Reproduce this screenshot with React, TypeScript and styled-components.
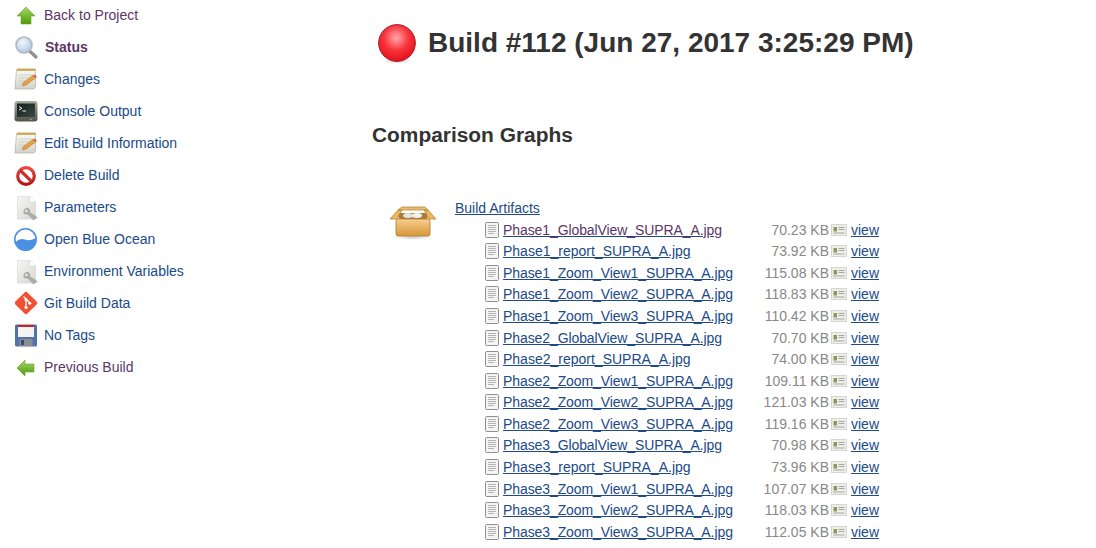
import React from 'react';
import styled, { createGlobalStyle } from 'styled-components';

const GlobalStyle = createGlobalStyle`
  html, body { margin: 0; padding: 0; background: #fff; overflow: hidden; height: 548px; }
  body { font-family: 'Liberation Sans', Arial, Helvetica, sans-serif; color: #333; }
`;

const Page = styled.div`
  display: flex;
  width: 1096px;
  height: 548px;
  overflow: hidden;
`;

const Sidebar = styled.nav`
  width: 372px;
  flex: none;
  margin-top: -1px;
  box-sizing: border-box;
  padding-left: 14px;
`;

const TaskRow = styled.a<{ $visited?: boolean; $bold?: boolean }>`
  display: flex;
  align-items: center;
  gap: ${(p) => (p.$bold ? 7 : 6)}px;
  height: 32px;
  font-size: 14px;
  font-weight: ${(p) => (p.$bold ? 700 : 400)};
  color: ${(p) => (p.$visited ? '#5c3566' : '#204a87')};
  text-decoration: none;
`;

const IconBox = styled.span`
  display: block;
  width: 24px;
  height: 24px;
  flex: none;
  svg { display: block; overflow: visible; }
`;

const Main = styled.main`
  flex: 1;
  min-width: 0;
`;

const TitleRow = styled.div`
  display: flex;
  align-items: center;
  gap: 12px;
  height: 38px;
  margin: 25px 0 0 6px;
`;

const BuildTitle = styled.h1`
  margin: 0;
  padding-bottom: 2px;
  font-size: 28px;
  font-weight: 700;
  line-height: 34px;
  color: #333;
  white-space: nowrap;
`;

const SectionTitle = styled.h2`
  margin: 58px 0 0;
  font-size: 20.9px;
  line-height: 28px;
  font-weight: 700;
  color: #333;
`;

const Artifacts = styled.section`
  display: flex;
  margin: 50px 0 0 17px;
`;

const BoxSlot = styled.div`
  width: 66px;
  flex: none;
  padding-top: 5px;
  svg { display: block; }
`;

const ArtifactBody = styled.div`
  flex: 1;
`;

const RootLink = styled.a`
  display: block;
  height: 20px;
  line-height: 18px;
  font-size: 14px;
  color: #204a87;
  text-decoration: underline;
`;

const FileRow = styled.div`
  display: grid;
  grid-template-columns: 18px 260px 66px 22px auto;
  align-items: center;
  height: 21.57px;
  margin-left: 30px;
  font-size: 14px;
  white-space: nowrap;
`;

const FileName = styled.a<{ $visited?: boolean; $tight?: boolean }>`
  color: ${(p) => (p.$visited ? '#5c3566' : '#204a87')};
  letter-spacing: ${(p) => (p.$tight ? '-0.09px' : 'normal')};
  text-decoration: underline;
  text-decoration-color: #204a87;
`;

const FileSize = styled.span`
  color: #888;
  text-align: right;
`;

const ViewLink = styled.a`
  color: #204a87;
  text-decoration: underline;
`;

const PictureSlot = styled.span`
  display: block;
  padding-left: 2px;
  svg { display: block; }
`;

const DocSlot = styled.span`
  svg { display: block; }
`;

const ArrowUp = () => (
  <svg width="24" height="24" viewBox="0 0 24 24">
    <defs>
      <linearGradient id="au" x1="0" y1="0" x2="0" y2="1">
        <stop offset="0" stopColor="#a6d86a" />
        <stop offset="1" stopColor="#4e9a06" />
      </linearGradient>
    </defs>
    <path d="M12 4 L21 13 H17 V21 H7 V13 H3 Z" fill="url(#au)" stroke="#6aa82e" strokeWidth=".6" />
  </svg>
);

const ArrowLeft = () => (
  <svg width="24" height="24" viewBox="0 0 24 24">
    <defs>
      <linearGradient id="al" x1="0" y1="0" x2="0" y2="1">
        <stop offset="0" stopColor="#a4d76c" />
        <stop offset="1" stopColor="#4e9a06" />
      </linearGradient>
    </defs>
    <path d="M3 13 L11 5 V9 H20 V17 H11 V21 Z" fill="url(#al)" stroke="#6aa82e" strokeWidth=".6" />
  </svg>
);

const Search = () => (
  <svg width="24" height="24" viewBox="0 0 24 24">
    <defs>
      <radialGradient id="lens" cx=".4" cy=".35" r=".8">
        <stop offset="0" stopColor="#f3f8fd" />
        <stop offset="1" stopColor="#9dbde2" />
      </radialGradient>
    </defs>
    <path d="M15 15.5 L22 22" stroke="#8b8f94" strokeWidth="3.2" strokeLinecap="round" />
    <circle cx="10" cy="10" r="8" fill="url(#lens)" stroke="#b4b8bd" strokeWidth="1.6" />
  </svg>
);

const Notepad = () => (
  <svg width="24" height="24" viewBox="0 0 24 24">
    <defs>
      <linearGradient id="np" x1="0" y1="0" x2="0" y2="1">
        <stop offset="0" stopColor="#fbfbf6" />
        <stop offset="1" stopColor="#d2d2cc" />
      </linearGradient>
    </defs>
    <path d="M2.5 2.5 H21.5 V19 Q21.5 22 19 22 H1 Z" fill="url(#np)" stroke="#b3b2a8" strokeWidth=".7" />
    <rect x="3" y="1.5" width="18.5" height="2.5" fill="#c9ad62" />
    <path d="M5 8 H19 M5 11 H17 M4.5 14 H12 M4 17 H11" stroke="#cfcfc7" strokeWidth="1" />
    <path d="M8.5 19 L9.5 15.5 L19 8.5 L21.5 11 L12 18 Z" fill="#e8a33c" stroke="#a06b20" strokeWidth=".5" />
    <path d="M19 8.5 L21.5 11 L22.8 9.8 L20.6 7.4 Z" fill="#d9534a" />
  </svg>
);

const Terminal = () => (
  <svg width="24" height="24" viewBox="0 0 24 24">
    <defs>
      <linearGradient id="tm" x1="0" y1="0" x2="0" y2="1">
        <stop offset="0" stopColor="#a9ad9f" />
        <stop offset="1" stopColor="#4f5348" />
      </linearGradient>
      <linearGradient id="tmScreen" x1="0" y1="0" x2="1" y2="1">
        <stop offset="0" stopColor="#12201c" />
        <stop offset="1" stopColor="#3a4a42" />
      </linearGradient>
    </defs>
    <rect x="0.5" y="2" width="23" height="20.5" rx="3" fill="url(#tm)" />
    <rect x="3" y="4.5" width="18" height="13.5" fill="url(#tmScreen)" />
    <path d="M5 7.5 L8 9.3 L5 11 M8.5 12 H12" stroke="#e8eee8" strokeWidth="1" fill="none" />
    <rect x="16" y="20" width="1.4" height="1" fill="#9fd05a" />
  </svg>
);

const NoEntry = () => (
  <svg width="24" height="24" viewBox="0 0 24 24">
    <defs>
      <linearGradient id="ne" x1="0" y1="0" x2="0" y2="1">
        <stop offset="0" stopColor="#e9483f" />
        <stop offset="1" stopColor="#b01a1a" />
      </linearGradient>
    </defs>
    <circle cx="12" cy="13" r="8.3" fill="#fff" stroke="url(#ne)" strokeWidth="3.2" />
    <path d="M6.3 7.3 L17.7 18.7" stroke="#cf2a25" strokeWidth="3.2" />
  </svg>
);

const Setting = () => (
  <svg width="24" height="24" viewBox="0 0 24 24">
    <defs>
      <linearGradient id="st" x1="0" y1="0" x2="1" y2="1">
        <stop offset="0" stopColor="#f5f5f1" />
        <stop offset="1" stopColor="#d8d8d3" />
      </linearGradient>
    </defs>
    <path d="M3.5 1.5 H16 L21.5 7 V24 H3.5 Z" fill="url(#st)" stroke="#d4d4cf" strokeWidth=".6" />
    <path d="M16 1.5 V7 H21.5" fill="#fff" stroke="#d4d4cf" strokeWidth=".6" />
    <path d="M14.5 13 Q9 12.5 9.5 18 Q11 20 13.5 19.5 L19.5 25.2 L23.8 22.5 L16.5 17.5 Q16.8 15 14.5 13 Z" fill="#a9aca7" />
    <circle cx="12.4" cy="16" r="1.2" fill="#eee" />
  </svg>
);

const BlueOcean = () => (
  <svg width="24" height="24" viewBox="0 0 24 24">
    <circle cx="11.5" cy="12.5" r="10.7" fill="#fff" stroke="#4a90e2" strokeWidth="1.6" />
    <path d="M1.5 15 Q6 10.5 11 12.5 T21.6 11 Q22.5 22.5 11.5 23 Q3.5 22.5 1.5 15 Z" fill="#4a90e2" />
  </svg>
);

const GitLogo = () => (
  <svg width="24" height="24" viewBox="0 0 24 24">
    <rect x="3.5" y="3.5" width="17" height="17" rx="2" fill="#f05133" transform="rotate(45 12 12)" />
    <path d="M9.5 5.5 L16.5 12.5 M12 8.5 V16.5" stroke="#fff" strokeWidth="1.3" />
    <circle cx="12" cy="8.5" r="1.5" fill="#fff" />
    <circle cx="15.8" cy="12.2" r="1.5" fill="#fff" />
    <circle cx="12" cy="16.5" r="1.6" fill="#fff" />
  </svg>
);

const Floppy = () => (
  <svg width="24" height="24" viewBox="0 0 24 24">
    <rect x="1" y="1.5" width="22" height="22" rx="1.5" fill="#5272a8" />
    <rect x="4" y="2" width="16" height="12" fill="#f4f4f4" />
    <rect x="4" y="2" width="16" height="2" fill="#cc2222" />
    <rect x="5.5" y="16" width="13" height="7" fill="#8a8f97" />
    <rect x="7" y="17" width="3" height="5" fill="#3b4a66" />
  </svg>
);

const RedBall = () => (
  <svg width="38" height="40" viewBox="0 0 38 40">
    <defs>
      <radialGradient id="ball" cx=".48" cy=".36" r=".62">
        <stop offset="0" stopColor="#ffa8ac" />
        <stop offset=".55" stopColor="#f8343c" />
        <stop offset="1" stopColor="#e5131d" />
      </radialGradient>
      <radialGradient id="ballShade" cx=".5" cy=".5" r=".5">
        <stop offset="0" stopColor="#888" stopOpacity=".45" />
        <stop offset="1" stopColor="#888" stopOpacity="0" />
      </radialGradient>
    </defs>
    <ellipse cx="19" cy="37" rx="15" ry="3" fill="url(#ballShade)" />
    <circle cx="19" cy="19" r="18.4" fill="url(#ball)" stroke="#9c1a24" strokeWidth=".9" />
  </svg>
);

const PackageBox = () => (
  <svg width="48" height="36" viewBox="0 0 48 36">
    <defs>
      <linearGradient id="boxFront" x1="0" y1="0" x2="0" y2="1">
        <stop offset="0" stopColor="#f5cf8f" />
        <stop offset="1" stopColor="#d8963a" />
      </linearGradient>
      <radialGradient id="boxShade" cx=".5" cy=".5" r=".5">
        <stop offset="0" stopColor="#777" stopOpacity=".4" />
        <stop offset="1" stopColor="#777" stopOpacity="0" />
      </radialGradient>
    </defs>
    <ellipse cx="24" cy="33" rx="20" ry="3" fill="url(#boxShade)" />
    <path d="M8 9 H40 L37 17 H11 Z" fill="#a87c3c" />
    <ellipse cx="19" cy="11.5" rx="5" ry="2.5" fill="#e4e4e0" />
    <ellipse cx="28" cy="11.5" rx="5" ry="2.5" fill="#f2f2ee" />
    <path d="M1 15 L9 6 L13 6 L8 15 Z M47 15 L39 6 L35 6 L40 15 Z" fill="#eab765" stroke="#b37a28" strokeWidth=".7" />
    <path d="M9 6 H39 L36 3 H13 Z" fill="#e9bd75" stroke="#b37a28" strokeWidth=".7" />
    <rect x="7" y="15" width="34" height="17" rx="2" fill="url(#boxFront)" stroke="#b37a28" strokeWidth=".8" />
  </svg>
);

const DocIcon = () => (
  <svg width="14" height="16" viewBox="0 0 14 16">
    <rect x=".5" y=".5" width="13" height="15" rx="1" fill="#f4f4f4" stroke="#8f8f8f" />
    <path d="M3 3.5 H11 M3 5.5 H11 M3 7.5 H11 M3 9.5 H11 M3 11.5 H9" stroke="#b4b4b4" />
  </svg>
);

const PictureIcon = () => (
  <svg width="16" height="12" viewBox="0 0 16 12">
    <rect x=".5" y=".5" width="15" height="11" fill="#eeeeea" stroke="#d6d6d1" />
    <rect x="2.5" y="3" width="3.5" height="4.5" fill="#8d9a55" />
    <path d="M7.5 3.5 H13.5 M7.5 5.5 H13.5 M2.5 9 H13.5" stroke="#a6a6a2" />
  </svg>
);

const tasks = [
  { label: 'Back to Project', icon: <ArrowUp />, visited: true },
  { label: 'Status', icon: <Search />, visited: true, bold: true },
  { label: 'Changes', icon: <Notepad /> },
  { label: 'Console Output', icon: <Terminal /> },
  { label: 'Edit Build Information', icon: <Notepad /> },
  { label: 'Delete Build', icon: <NoEntry /> },
  { label: 'Parameters', icon: <Setting /> },
  { label: 'Open Blue Ocean', icon: <BlueOcean /> },
  { label: 'Environment Variables', icon: <Setting /> },
  { label: 'Git Build Data', icon: <GitLogo /> },
  { label: 'No Tags', icon: <Floppy /> },
  { label: 'Previous Build', icon: <ArrowLeft />, visited: true },
];

const artifacts = [
  ['Phase1_GlobalView_SUPRA_A.jpg', '70.23 KB'],
  ['Phase1_report_SUPRA_A.jpg', '73.92 KB'],
  ['Phase1_Zoom_View1_SUPRA_A.jpg', '115.08 KB'],
  ['Phase1_Zoom_View2_SUPRA_A.jpg', '118.83 KB'],
  ['Phase1_Zoom_View3_SUPRA_A.jpg', '110.42 KB'],
  ['Phase2_GlobalView_SUPRA_A.jpg', '70.70 KB'],
  ['Phase2_report_SUPRA_A.jpg', '74.00 KB'],
  ['Phase2_Zoom_View1_SUPRA_A.jpg', '109.11 KB'],
  ['Phase2_Zoom_View2_SUPRA_A.jpg', '121.03 KB'],
  ['Phase2_Zoom_View3_SUPRA_A.jpg', '119.16 KB'],
  ['Phase3_GlobalView_SUPRA_A.jpg', '70.98 KB'],
  ['Phase3_report_SUPRA_A.jpg', '73.96 KB'],
  ['Phase3_Zoom_View1_SUPRA_A.jpg', '107.07 KB'],
  ['Phase3_Zoom_View2_SUPRA_A.jpg', '118.03 KB'],
  ['Phase3_Zoom_View3_SUPRA_A.jpg', '112.05 KB'],
];

const App: React.FC = () => (
  <Page>
    <GlobalStyle />
    <Sidebar>
      {tasks.map((t) => (
        <TaskRow key={t.label} href="#" $visited={t.visited} $bold={t.bold}>
          <IconBox>{t.icon}</IconBox>
          {t.label}
        </TaskRow>
      ))}
    </Sidebar>
    <Main>
      <TitleRow>
        <RedBall />
        <BuildTitle>Build #112 (Jun 27, 2017 3:25:29 PM)</BuildTitle>
      </TitleRow>
      <SectionTitle>Comparison Graphs</SectionTitle>
      <Artifacts>
        <BoxSlot>
          <PackageBox />
        </BoxSlot>
        <ArtifactBody>
          <RootLink href="#">Build Artifacts</RootLink>
          {artifacts.map(([name, size], idx) => (
            <FileRow key={name}>
              <DocSlot>
                <DocIcon />
              </DocSlot>
              <FileName href="#" $visited={idx === 0} $tight={name.includes('View')}>{name}</FileName>
              <FileSize>{size}</FileSize>
              <PictureSlot>
                <PictureIcon />
              </PictureSlot>
              <ViewLink href="#">view</ViewLink>
            </FileRow>
          ))}
        </ArtifactBody>
      </Artifacts>
    </Main>
  </Page>
);

export default App;
